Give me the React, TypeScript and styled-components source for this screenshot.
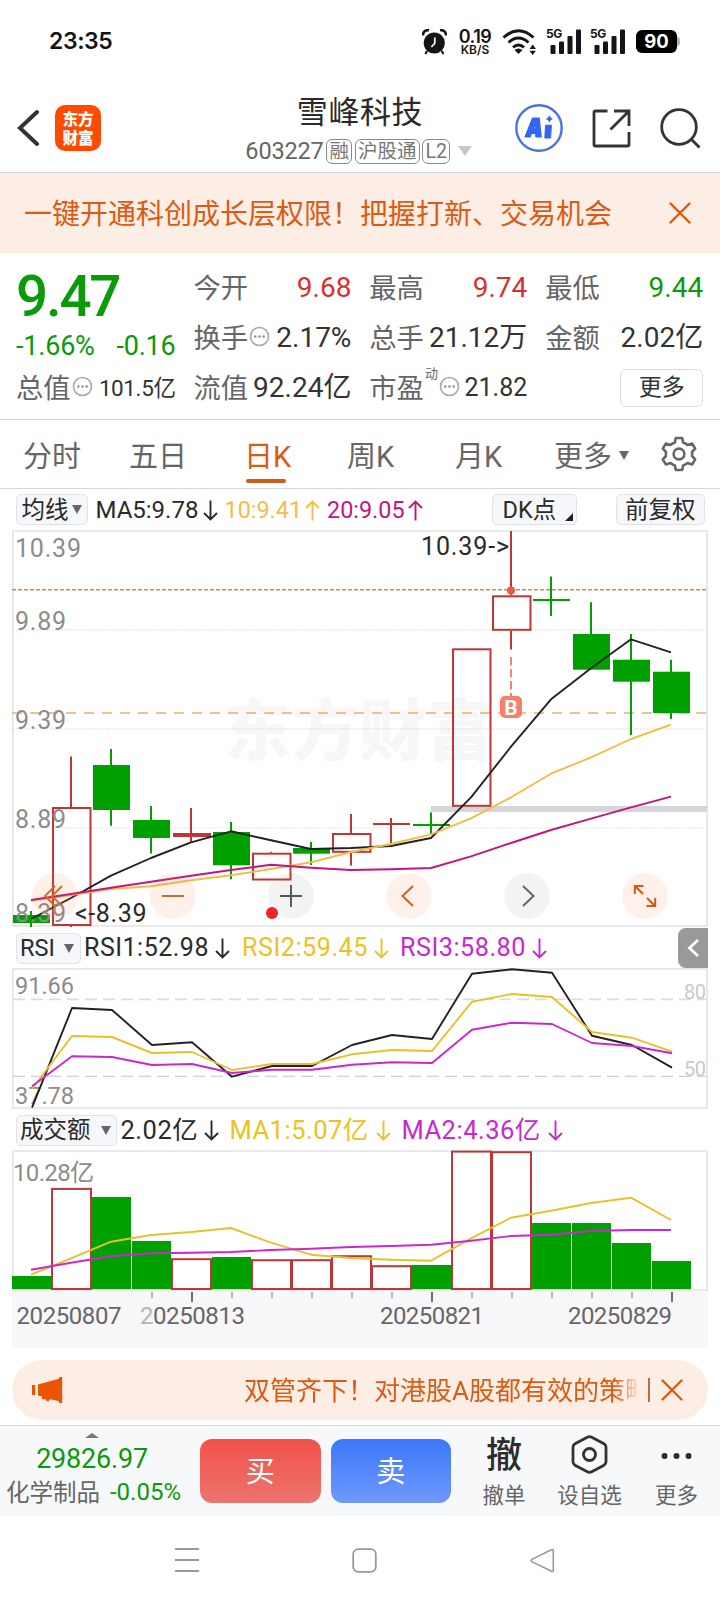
import React from 'react';
import styled, { createGlobalStyle, css } from 'styled-components';

const UI = `Roboto, "Noto Sans CJK SC", sans-serif`;
const GREEN = '#0a9a0a';
const FILL = '#00a000';
const RED = '#d92f2f';
const CANDLE = '#c03636';
const ORANGE = '#dc5a12';
const PURPLE = '#c41482';
const GOLD = '#f2bd45';
const YELLOW = '#ecc21c';
const MAGENTA = '#cb26d0';
const INK = '#2a2a2a';
const GREY = '#666666';

const GlobalStyle = createGlobalStyle`
  * { box-sizing: border-box; }
  html, body { margin: 0; padding: 0; background: #fff; }
  svg { display: block; flex: none; }
`;

const Screen = styled.main`
  width: 720px;
  height: 1604px;
  overflow: hidden;
  display: flex;
  flex-direction: column;
  background: #fff;
  color: ${INK};
  font-family: ${UI};
`;

const Txt = styled.span<{ $s: number; $c?: string; $w?: number; $ls?: number }>`
  font-size: ${p => p.$s}px;
  line-height: 1.2;
  white-space: nowrap;
  color: ${p => p.$c ?? 'inherit'};
  font-weight: ${p => p.$w ?? 400};
  letter-spacing: ${p => p.$ls ?? 0}px;
`;

/* ---------- status bar ---------- */
const StatusBar = styled.header`
  height: 82px;
  padding: 1px 40px 0 49px;
  display: flex;
  align-items: center;
  color: #151515;
  font-family: Inter, Roboto, sans-serif;
`;
const StatusIcons = styled.div`
  margin-left: auto;
  display: flex;
  align-items: center;
`;
const NetSpeed = styled.div`
  width: 36px;
  margin: 0 9px 0 10px;
  display: flex;
  flex-direction: column;
  align-items: center;
`;
const NetValue = styled.div`
  font-size: 18px;
  font-weight: 600;
  line-height: 15px;
  letter-spacing: -0.5px;
`;
const NetUnit = styled.div`
  font-size: 12px;
  font-weight: 600;
  line-height: 11px;
`;
const SignalWrap = styled.div`
  width: 34px;
  margin-left: 10px;
  position: relative;
`;
const SignalLabel = styled.span`
  position: absolute;
  left: -1px;
  top: -1px;
  font-size: 12px;
  line-height: 12px;
  font-weight: 700;
  letter-spacing: -0.5px;
`;
const Battery = styled.div`
  width: 41px;
  height: 23px;
  margin-left: 11px;
  border-radius: 6px;
  background: #000;
  color: #fff;
  font-size: 18.5px;
  font-weight: 700;
  line-height: 23px;
  text-align: center;
`;
const BatteryNub = styled.div`
  width: 3px;
  height: 9px;
  border-radius: 0 3px 3px 0;
  background: #b5b5b5;
`;

const Signal = () => (
  <SignalWrap>
    <SignalLabel>5G</SignalLabel>
    <svg width="34" height="25" viewBox="0 0 34 25" fill="#151515">
      <rect x="3.5" y="16" width="5" height="9" rx="1" />
      <rect x="12" y="12.5" width="5" height="12.5" rx="1" />
      <rect x="20.5" y="7" width="5" height="18" rx="1" />
      <rect x="29" y="0.5" width="5" height="24.5" rx="1" />
    </svg>
  </SignalWrap>
);

/* ---------- title bar ---------- */
const TitleBar = styled.section`
  height: 91px;
  padding-top: 2px;
  display: grid;
  grid-template-columns: 240px 240px 240px;
  border-bottom: 1px solid #d4d6d8;
`;
const TitleLeft = styled.div`
  display: flex;
  align-items: center;
  padding-left: 17px;
  gap: 16px;
`;
const Logo = styled.div`
  width: 46px;
  height: 46px;
  border-radius: 10px;
  background: #ff4a00;
  color: #fff;
  font: 900 15.5px/19px "Noto Sans CJK SC", sans-serif;
  text-align: center;
  padding-top: 4px;
`;
const TitleMid = styled.div`
  display: flex;
  flex-direction: column;
  align-items: center;
  padding: 10px 3px 0 0;
`;
const CodeRow = styled.div`
  display: flex;
  align-items: center;
  gap: 2.5px;
  height: 28px;
  margin-top: 6px;
  color: ${GREY};
`;
const Title = styled(Txt)`margin-left: 3px;`;
const Tag = styled.span<{ $w: number }>`
  width: ${p => p.$w}px;
  height: 25px;
  border: 1.5px solid #8a8a8a;
  border-radius: 6px;
  font-size: 19.5px;
  line-height: 23px;
  text-align: center;
  color: #777;
  white-space: nowrap;
`;
const TitleRight = styled.div`
  display: flex;
  align-items: center;
  padding-left: 35px;
`;
const TitleIcon = styled.div<{ $ml?: number }>`
  margin-left: ${p => p.$ml ?? 0}px;
`;
const Caret = styled.i<{ $w: number; $h: number; $c: string; $up?: boolean }>`
  width: 0;
  height: 0;
  border-left: ${p => p.$w / 2}px solid transparent;
  border-right: ${p => p.$w / 2}px solid transparent;
  ${p =>
    p.$up
      ? css`border-bottom: ${p.$h}px solid ${p.$c};`
      : css`border-top: ${p.$h}px solid ${p.$c};`}
`;
const CodeCaret = styled(Caret)`margin-left: 5px;`;

/* ---------- promotion banner ---------- */
const Promo = styled.section`
  height: 80px;
  padding: 0 29px 0 24px;
  display: flex;
  align-items: center;
  justify-content: space-between;
  background: #fceee5;
`;
const PromoText = styled(Txt)`padding-top: 4px;`;
const Close = () => (
  <svg width="22" height="22" viewBox="0 0 22 22" stroke={ORANGE} strokeWidth="2.4" strokeLinecap="round">
    <path d="M1.5 1.5 20.5 20.5M20.5 1.5 1.5 20.5" />
  </svg>
);

/* ---------- quote panel ---------- */
const Quote = styled.section`
  height: 167px;
  padding: 10px 16px 0 16px;
  display: grid;
  grid-template-columns: 159.5px 158px 158px 158px;
  grid-template-rows: 50px 50px 50px;
  column-gap: 17.9px;
  border-bottom: 1px solid #d4d6d8;
`;
const PriceBlock = styled.div`
  grid-row: span 2;
  display: flex;
  flex-direction: column;
  padding-top: 3px;
`;
const Price = styled.div`
  color: ${GREEN};
  font-size: 56.5px;
  font-weight: 500;
  line-height: 62px;
  letter-spacing: -2.2px;
`;
const ChangeRow = styled.div`
  display: flex;
  justify-content: space-between;
  margin-top: 2px;
`;
const Cell = styled.div`
  display: flex;
  align-items: center;
  justify-content: space-between;
`;
const Label = styled.span`
  display: flex;
  align-items: center;
  padding-top: 2px;
  font-size: 27.3px;
  line-height: 36px;
  white-space: nowrap;
  color: ${GREY};
`;
const Sup = styled.sup`
  font-size: 13px;
  line-height: 14px;
  align-self: flex-start;
  margin: -4px 0 0 1px;
`;
const MoreButton = styled.button`
  width: 83px;
  height: 38px;
  margin-left: auto;
  padding: 0;
  border: 1.5px solid #dcdee2;
  border-radius: 6px;
  background: #fff;
  color: #333;
  font: 400 23px/32px ${UI};
`;
const HintSlot = styled.span`
  margin: 0 0 5px 1px;
`;
const Hint = () => (
  <HintSlot>
    <svg width="21" height="21" viewBox="0 0 21 21">
      <circle cx="10.5" cy="10.5" r="9" fill="none" stroke="#a8a8a8" strokeWidth="1.6" />
      <g fill="#8a8a8a">
        <circle cx="6.3" cy="10.5" r="1.2" />
        <circle cx="10.5" cy="10.5" r="1.2" />
        <circle cx="14.7" cy="10.5" r="1.2" />
      </g>
    </svg>
  </HintSlot>
);

type StatProps = {
  label: string;
  value: string;
  color?: string;
  size?: number;
  hint?: boolean;
  sup?: string;
  ls?: number;
};
const Stat = ({ label, value, color = '#333', size = 28, hint, sup, ls }: StatProps) => (
  <Cell>
    <Label>
      {label}
      {sup && <Sup>{sup}</Sup>}
      {hint && <Hint />}
    </Label>
    <Txt $s={size} $c={color} $ls={ls}>{value}</Txt>
  </Cell>
);

/* ---------- period tabs ---------- */
const Tabs = styled.nav`
  height: 69px;
  padding-left: 23px;
  display: grid;
  grid-template-columns: 106px 115px 103px 108px 99px 106px auto;
  align-items: stretch;
  border-bottom: 1px solid #d4d6d8;
`;
const Tab = styled.div<{ $on?: boolean }>`
  display: flex;
  flex-direction: column;
  font-size: 29px;
  line-height: 36px;
  padding-top: 19px;
  white-space: nowrap;
  color: ${p => (p.$on ? ORANGE : GREY)};
  &::after {
    content: '';
    width: 40px;
    height: 4px;
    margin: 4px 0 0 2px;
    border-radius: 2px;
    background: ${p => (p.$on ? '#cc5a18' : 'transparent')};
  }
`;
const TabMore = styled.span`
  display: flex;
  align-items: center;
  gap: 7px;
`;
const TabCaret = styled(Caret)`margin-bottom: 3px;`;
const GearSlot = styled.div`padding: 16px 0 0 1px;`;

/* ---------- indicator headers ---------- */
const Legend = styled.div<{ $h: number }>`
  height: ${p => p.$h}px;
  padding-left: 16px;
  display: flex;
  align-items: center;
  position: relative;
`;
const Chip = styled.div<{ $w: number; $gap?: number }>`
  width: ${p => p.$w}px;
  height: 31px;
  padding: 0 4.5px;
  display: flex;
  align-items: center;
  gap: ${p => p.$gap ?? 3}px;
  border: 1.5px solid #dfe2e8;
  border-radius: 5px;
  background: #f6f7fa;
  font-size: 23.5px;
  line-height: 28px;
  white-space: nowrap;
  position: relative;
`;
const LowChip = styled(Chip)`
  margin-top: 1px;
  padding-left: 3px;
`;
const DkChip = styled(Chip)`
  margin-left: auto;
  padding-left: 9.5px;
`;
const AdjustChip = styled(Chip)`
  margin: 0 15.5px 0 39px;
  justify-content: center;
`;
const Corner = styled.i`
  position: absolute;
  right: 3.5px;
  bottom: 3.5px;
  border-left: 8px solid transparent;
  border-bottom: 8px solid #222;
`;
const Reading = styled.div<{ $c: string; $w: number; $s: number; $ml: number; $ls?: number }>`
  width: ${p => p.$w}px;
  margin-left: ${p => p.$ml}px;
  padding-top: 1px;
  display: flex;
  align-items: center;
  justify-content: space-between;
  color: ${p => p.$c};
  font-size: ${p => p.$s}px;
  line-height: 30px;
  letter-spacing: ${p => p.$ls ?? 0}px;
  white-space: nowrap;
`;
const Arrow = ({ up }: { up?: boolean }) => (
  <svg width="15" height="21" viewBox="0 0 15 21" fill="none" stroke="currentColor" strokeWidth="1.9">
    <path d={up ? 'M7.5 20.5V1.5M1 8 7.5 1.5 14 8' : 'M7.5 0.5V19.5M1 13 7.5 19.5 14 13'} />
  </svg>
);
const Collapse = styled.div`
  position: absolute;
  right: 12px;
  top: 1px;
  width: 30px;
  height: 40px;
  border-radius: 8px 0 0 8px;
  background: #999;
  display: flex;
  align-items: center;
  justify-content: center;
`;

/* ---------- charts ---------- */
const ChartBox = styled.div`
  margin: 0 12px;
  position: relative;
`;
const Controls = styled.div`
  position: absolute;
  left: 20px;
  bottom: 8px;
  display: flex;
  gap: 72px;
`;
const Round = styled.div<{ $grey?: boolean }>`
  width: 46px;
  height: 46px;
  border-radius: 50%;
  background: ${p => (p.$grey ? 'rgba(120,120,120,0.09)' : 'rgba(255,110,40,0.1)')};
  display: flex;
  align-items: center;
  justify-content: center;
`;

type Candle = { up: boolean; t: number; b: number; h: number; l: number; flat?: boolean };
const CANDLES: Candle[] = [
  { up: false, t: 915, b: 923, h: 911, l: 927 },
  { up: true, t: 807, b: 926, h: 756.5, l: 927 },
  { up: false, t: 765, b: 810, h: 749, l: 825.7 },
  { up: false, t: 820, b: 838, h: 806, l: 853.5 },
  { up: true, t: 833, b: 837, h: 808, l: 843, flat: true },
  { up: false, t: 832, b: 865.3, h: 822, l: 879.3 },
  { up: true, t: 852.7, b: 880.5, h: 851.7, l: 853 },
  { up: false, t: 848, b: 853.7, h: 842, l: 865 },
  { up: true, t: 833, b: 852.8, h: 814, l: 865.5 },
  { up: true, t: 823, b: 825, h: 818, l: 843.5, flat: true },
  { up: false, t: 824, b: 826, h: 812.5, l: 835 },
  { up: true, t: 648.3, b: 806.8, h: 648.3, l: 650 },
  { up: true, t: 595.3, b: 630.8, h: 531, l: 649.5 },
  { up: false, t: 599, b: 601, h: 576.5, l: 616 },
  { up: false, t: 634, b: 669.7, h: 602.3, l: 669 },
  { up: false, t: 659.7, b: 681.7, h: 634, l: 735 },
  { up: false, t: 671.7, b: 713, h: 659.7, l: 719 },
];
const VOLUME: [boolean, number][] = [
  [false, 1276], [true, 1188], [false, 1197], [false, 1241], [true, 1258.3], [false, 1257],
  [true, 1259.3], [true, 1259.3], [true, 1255.3], [true, 1265.3], [false, 1265], [true, 1150.7],
  [true, 1151.3], [false, 1223], [false, 1223], [false, 1243], [false, 1261],
];
const series = (x0: number, ys: number[]) => ys.map((y, i) => `${x0 + i * 40},${y}`).join(' ');

const MA5 = [919, 898, 875.7, 858, 842.3, 831.3, 840.3, 849, 848, 846, 838, 797.3, 746.7, 699.3, 668.3, 639.3, 652.3];
const MA10 = [900.7, 895, 889, 886.3, 880.3, 875.3, 869, 862.3, 852, 844, 834.3, 818.3, 797.3, 773.7, 757.3, 739, 724.7];
const MA20 = [900, 894, 887.7, 881.7, 875.7, 870, 864.7, 867.7, 870, 869.3, 868, 856.3, 843, 830, 818.7, 807.3, 796.7];
const RSI1 = [1107.7, 1008, 1010, 1045, 1042.3, 1076.7, 1066, 1066, 1045, 1035, 1039, 973.7, 969.3, 972.7, 1035.7, 1045, 1067.7];
const RSI2 = [1089, 1036, 1037, 1053, 1052, 1070, 1064, 1064, 1054.3, 1050, 1051, 1001.7, 994, 997, 1032, 1037.7, 1051.7];
const RSI3 = [1086.3, 1056.3, 1057, 1065, 1064, 1073, 1069.7, 1069.7, 1064.7, 1062.3, 1063, 1029.7, 1022.7, 1024, 1043, 1046, 1053.3];
const VMA1 = [1274.7, 1258.3, 1241.7, 1235, 1232, 1228, 1242.7, 1254.7, 1258, 1259.7, 1260.7, 1238.3, 1217.7, 1210.7, 1203, 1197.7, 1220];
const VMA2 = [1269.7, 1262.7, 1256.3, 1253.3, 1252.7, 1252, 1250, 1248.7, 1247, 1246, 1244.7, 1240.7, 1236, 1234.7, 1231, 1230, 1230];

type MarkProps = { x: number; y: number; w: number; s: number; c?: string; children: string };
const Mark = ({ x, y, w, s, c = '#8c8c8c', children }: MarkProps) => (
  <text x={x} y={y + s * 0.356} fontSize={s} fill={c} fontFamily={UI} textLength={w}>
    {children}
  </text>
);

const Frame = ({ y, h }: { y: number; h: number }) => (
  <path d={`M12.75 ${y + 1}H707V${y + h - 1}H12.75Z`} fill="none" stroke="#e2e2e2" strokeWidth="1.6" />
);

const PriceChart = () => (
  <svg width="696" height="397" viewBox="12 530 696 397">
    <text x="224" y="755" fontSize="67" fontWeight="900" fill="#f7f7f7" fontFamily={`"Noto Sans CJK SC", sans-serif`} textLength="270">
      东方财富
    </text>
    <Frame y={530} h={397} />
    <g stroke="#dedede" strokeWidth="1.2" strokeDasharray="1.5 1.5">
      <path d="M13 629.8H706M13 728.8H706M13 828H706" />
    </g>
    <rect x="431" y="806" width="276" height="6" fill="#d3d6db" />
    <path d="M12 589.8H706" stroke="#c88a5c" strokeWidth="1.6" strokeDasharray="4 2" />
    <path d="M12 713H706" stroke="#e3b078" strokeWidth="1.6" strokeDasharray="10 8" />
    {CANDLES.map((k, i) => {
      const c = 31 + i * 40;
      const color = k.up ? CANDLE : FILL;
      return (
        <g key={i}>
          <path d={`M${c} ${k.h}V${k.up && !k.flat ? k.t : k.l}`} stroke={color} strokeWidth="2" />
          {k.up && !k.flat ? (
            <>
              <rect x={c - 18} y={k.t + 1} width="37.5" height={k.b - k.t - 2} fill="none" stroke={color} strokeWidth="2" />
              {k.l > k.b && <path d={`M${c} ${k.b}V${k.l}`} stroke={color} strokeWidth="2" />}
            </>
          ) : (
            <rect x={c - 18} y={k.t} width={i === 4 ? 38 : 37} height={k.b - k.t} fill={color} />
          )}
        </g>
      );
    })}
    <path d="M511 657V696" stroke="#ee7a68" strokeWidth="1.8" strokeDasharray="8.5 3.5" />
    <circle cx="511" cy="590.5" r="4" fill="#ef5a42" />
    <g fill="none" strokeWidth="1.9" strokeLinejoin="round">
      <polyline points={series(31, MA5)} stroke="#222" />
      <polyline points={series(31, MA10)} stroke={GOLD} />
      <polyline points={series(31, MA20)} stroke={PURPLE} />
    </g>
    <rect x="500" y="696" width="22" height="22" rx="5" fill="#f77f6c" />
    <text x="511" y="714.6" fontSize="21" fontWeight="700" fill="#fff" textAnchor="middle" fontFamily={UI}>B</text>
    <Mark x={15} y={548} w={66} s={25}>10.39</Mark>
    <Mark x={15} y={621} w={51} s={25}>9.89</Mark>
    <Mark x={15} y={720} w={51} s={25}>9.39</Mark>
    <Mark x={15} y={819} w={51} s={25}>8.89</Mark>
    <Mark x={15} y={913} w={51} s={25}>8.39</Mark>
    <Mark x={75} y={913} w={71.5} s={25} c={INK}>{'<-8.39'}</Mark>
    <Mark x={421} y={546} w={88} s={25} c={INK}>{'10.39->'}</Mark>
    <circle cx="272" cy="913" r="6" fill="#f02424" />
  </svg>
);

const RsiChart = () => (
  <svg width="696" height="141" viewBox="12 968 696 141">
    <Frame y={968} h={141} />
    <path d="M13 999.3H706" stroke="#dcdcdc" strokeWidth="1.8" strokeDasharray="12 6" />
    <path d="M13 1076.3H706" stroke="#c2c2c2" strokeWidth="1.1" strokeDasharray="12 6" />
    <Mark x={684} y={992} w={22} s={20} c="#cacaca">80</Mark>
    <Mark x={684} y={1069} w={22} s={20} c="#cacaca">50</Mark>
    <Mark x={15} y={986} w={59} s={23.5}>91.66</Mark>
    <Mark x={15} y={1096} w={59} s={23.5}>37.78</Mark>
    <g fill="none" strokeWidth="1.9" strokeLinejoin="round">
      <polyline points={series(32, RSI1)} stroke="#222" />
      <polyline points={series(32, RSI2)} stroke="#e8c02a" />
      <polyline points={series(32, RSI3)} stroke={MAGENTA} />
    </g>
  </svg>
);

const VolumeChart = () => (
  <svg width="696" height="198" viewBox="12 1150 696 198">
    <rect x="12" y="1291" width="696" height="57" fill="#f7f7fa" />
    <Frame y={1150} h={141} />
    <Mark x={13} y={1172.5} w={81} s={24}>10.28亿</Mark>
    {VOLUME.map(([up, top], i) => {
      const x = 12 + i * 40;
      return up ? (
        <rect key={i} x={x} y={top + 0.9} width="39" height={1289.6 - top - 1.5} fill="none" stroke={CANDLE} strokeWidth="2" />
      ) : (
        <rect key={i} x={x} y={top} width="39" height={1289 - top} fill={FILL} />
      );
    })}
    <g fill="none" strokeWidth="1.9" strokeLinejoin="round">
      <polyline points={series(31, VMA1)} stroke="#e8c02a" />
      <polyline points={series(31, VMA2)} stroke={MAGENTA} />
    </g>
    {Array.from({ length: 14 }, (_, i) => {
      const major = i % 6 === 1 || i === 13;
      return (
        <path
          key={i}
          d={`M${152 + i * 40} 1292V${major ? 1302 : 1298}`}
          stroke={major ? '#666' : '#b5b5b5'}
          strokeWidth="1.9"
        />
      );
    })}
    <Mark x={16.5} y={1315.8} w={105} s={24} c={GREY}>20250807</Mark>
    <Mark x={140} y={1315.8} w={13} s={24} c="#b5b5b5">2</Mark>
    <Mark x={153} y={1315.8} w={92} s={24} c={GREY}>0250813</Mark>
    <Mark x={380} y={1315.8} w={104} s={24} c={GREY}>20250821</Mark>
    <Mark x={568} y={1315.8} w={104} s={24} c={GREY}>20250829</Mark>
  </svg>
);

/* ---------- notice ---------- */
const Notice = styled.section`
  height: 60px;
  margin: 12px 12px 5px;
  padding: 0 25px 0 20px;
  border-radius: 30px;
  background: #fceee5;
  display: flex;
  align-items: center;
`;
const NoticeText = styled.div`
  width: 394px;
  margin-left: 181px;
  overflow: hidden;
  white-space: nowrap;
  font-size: 26px;
  line-height: 36px;
  padding-top: 1px;
  color: ${ORANGE};
  -webkit-mask-image: linear-gradient(90deg, #000 94%, transparent 101%);
  mask-image: linear-gradient(90deg, #000 94%, transparent 101%);
`;
const Divider = styled.i`
  width: 1.5px;
  height: 24px;
  margin: 0 11.5px 0 11.5px;
  background: #c46a38;
`;

/* ---------- action bar ---------- */
const ActionBar = styled.footer`
  height: 91px;
  border-top: 1px solid #d4d6d8;
  background: #f7f8fa;
  display: flex;
`;
const Sector = styled.div`
  width: 184px;
  padding-top: 7px;
  display: flex;
  flex-direction: column;
  align-items: center;
`;
const SectorValue = styled(Txt)`margin-top: 5px;`;
const SectorRow = styled.div`
  display: flex;
  align-items: center;
  gap: 10px;
  margin: 3px 0 0 3px;
`;
const TradeButton = styled.button<{ $from: string; $to: string; $ml: number }>`
  width: 120.5px;
  height: 64px;
  margin: 13px 0 0 ${p => p.$ml}px;
  padding: 0;
  border: 0;
  border-radius: 12px;
  background: linear-gradient(${p => p.$from}, ${p => p.$to});
  color: #fff;
  font: 400 29px/66px ${UI};
`;
const Tools = styled.div`
  margin-left: 22.5px;
  display: grid;
  grid-template-columns: 61px 110px 64px;
`;
const Tool = styled.div`
  display: flex;
  flex-direction: column;
  align-items: center;
  font-size: 21.5px;
  line-height: 30px;
  color: ${GREY};
  white-space: nowrap;
`;
const ToolIcon = styled.div`
  height: 55px;
  padding-top: 2px;
  display: flex;
  align-items: center;
  color: #2c2c2c;
  font-size: 36px;
  line-height: 44px;
  font-weight: 500;
`;
const ToolGlyph = styled(ToolIcon)`padding-top: 5px;`;

const SystemNav = styled.nav`
  height: 88px;
  padding-left: 175px;
  display: flex;
  align-items: center;
  gap: 153px;
`;

export default function App() {
  return (
    <>
      <GlobalStyle />
      <Screen>
        <StatusBar>
          <Txt $s={23} $w={600} $ls={-0.4}>23:35</Txt>
          <StatusIcons>
            <svg width="25" height="26" viewBox="0 0 25 26">
              <circle cx="12.3" cy="14" r="10.6" fill="#151515" />
              <path d="M1 6.5A5 5 0 0 1 7 1.2M24 6.5A5 5 0 0 0 18 1.2" fill="none" stroke="#151515" strokeWidth="2.6" />
              <path d="M5 22 3.4 25M19.8 22l1.6 3" stroke="#151515" strokeWidth="2.2" />
              <path d="M12.8 8.5V14.2L9.4 18" fill="none" stroke="#fff" strokeWidth="1.7" />
            </svg>
            <NetSpeed>
              <NetValue>0.19</NetValue>
              <NetUnit>KB/S</NetUnit>
            </NetSpeed>
            <svg width="35" height="26" viewBox="0 0 35 26" fill="none" stroke="#151515" strokeWidth="3">
              <path d="M1.5 8.5Q16.5 -5 31.5 8.5" />
              <path d="M6.5 13.5Q16.5 4.6 26.5 13.5" />
              <path d="M11 18.3Q16.5 13.6 22 18.3" />
              <path d="M12.5 21Q16.5 18 20.5 21L16.5 25Z" fill="#151515" stroke="none" />
              <path d="M27.5 20 30.7 15.5 33.9 20ZM27.5 21.7 30.7 26 33.9 21.7Z" fill="#151515" stroke="none" />
            </svg>
            <Signal />
            <Signal />
            <Battery>90</Battery>
            <BatteryNub />
          </StatusIcons>
        </StatusBar>

        <TitleBar>
          <TitleLeft>
            <svg width="22" height="38" viewBox="0 0 22 38" fill="none" stroke="#333" strokeWidth="4" strokeLinecap="round">
              <path d="M20 3 3 19 20 35" />
            </svg>
            <Logo>东方<br />财富</Logo>
          </TitleLeft>
          <TitleMid>
            <Title $s={31} $ls={0.6}>雪峰科技</Title>
            <CodeRow>
              <Txt $s={23.5} $ls={-0.15}>603227</Txt>
              <Tag $w={26}>融</Tag>
              <Tag $w={65}>沪股通</Tag>
              <Tag $w={28}>L2</Tag>
              <CodeCaret $w={15} $h={10} $c="#c8c8c8" />
            </CodeRow>
          </TitleMid>
          <TitleRight>
            <TitleIcon>
              <svg width="48" height="48" viewBox="0 0 48 48">
                <circle cx="24" cy="24" r="22.7" fill="#fff" stroke="#4a72e6" strokeWidth="2.4" />
                <path fillRule="evenodd" fill="#3366f5" stroke="#3366f5" strokeWidth="1.2" strokeLinejoin="round" d="M10 33 17.6 14H24.2L26.2 33H20.9L20.6 29.4H16.4L15.2 33ZM18 24.8H20.3L20 19.4Z" />
                <path fill="#3366f5" stroke="#3366f5" strokeWidth="1" strokeLinejoin="round" d="M30.6 21.2H36.4L35.6 34H29.8Z" />
                <path fill="#3366f5" d="M34.4 11.2 35.7 13.6 38 14.9 35.7 16.2 34.4 18.6 33.1 16.2 30.8 14.9 33.1 13.6Z" />
              </svg>
            </TitleIcon>
            <TitleIcon $ml={28.5}>
              <svg width="39" height="39" viewBox="0 0 39 39" fill="none" stroke="#333" strokeWidth="2.8">
                <path d="M15.5 2H3.5Q2 2 2 3.5V35.5Q2 37 3.5 37H35.5Q37 37 37 35.5V23" />
                <path d="M22 2H37V17M37 2 18.5 20.5" />
              </svg>
            </TitleIcon>
            <TitleIcon $ml={29.5}>
              <svg width="41" height="41" viewBox="0 0 41 41" fill="none" stroke="#333" strokeWidth="2.8">
                <circle cx="19" cy="19" r="17.3" />
                <path d="M31 31 39.5 39.5" />
              </svg>
            </TitleIcon>
          </TitleRight>
        </TitleBar>

        <Promo>
          <PromoText $s={28} $c={ORANGE}>一键开通科创成长层权限！把握打新、交易机会</PromoText>
          <Close />
        </Promo>

        <Quote>
          <PriceBlock>
            <Price>9.47</Price>
            <ChangeRow>
              <Txt $s={27} $c={GREEN} $ls={-0.2}>-1.66%</Txt>
              <Txt $s={27} $c={GREEN} $ls={-0.2}>-0.16</Txt>
            </ChangeRow>
          </PriceBlock>
          <Stat label="今开" value="9.68" color={RED} />
          <Stat label="最高" value="9.74" color={RED} />
          <Stat label="最低" value="9.44" color={GREEN} />
          <Stat label="换手" value="2.17%" hint />
          <Stat label="总手" value="21.12万" />
          <Stat label="金额" value="2.02亿" />
          <Stat label="总值" value="101.5亿" size={22.5} ls={-0.4} hint />
          <Stat label="流值" value="92.24亿" />
          <Stat label="市盈" value="21.82" sup="动" size={25} hint />
          <Cell>
            <MoreButton>更多</MoreButton>
          </Cell>
        </Quote>

        <Tabs>
          <Tab>分时</Tab>
          <Tab>五日</Tab>
          <Tab $on>日K</Tab>
          <Tab>周K</Tab>
          <Tab>月K</Tab>
          <Tab>
            <TabMore>
              更多
              <TabCaret $w={10} $h={9} $c="#666" />
            </TabMore>
          </Tab>
          <GearSlot>
            <svg width="36" height="36" viewBox="0 0 36 36" fill="none" stroke="#666" strokeWidth="2.6" strokeLinejoin="round">
              <path d="M14.8 2H21.2L22.2 6.6Q24.6 7.4 26.5 9L31.2 7.6 34.2 12.6 31 16Q31.4 18 31 20L34.2 23.4 31.2 28.4 26.5 27Q24.6 28.6 22.2 29.4L21.2 34H14.8L13.8 29.4Q11.4 28.6 9.5 27L4.8 28.4 1.8 23.4 5 20Q4.6 18 5 16L1.8 12.6 4.8 7.6 9.5 9Q11.4 7.4 13.8 6.6Z" />
              <circle cx="18" cy="18" r="5.4" />
            </svg>
          </GearSlot>
        </Tabs>

        <Legend $h={41}>
          <Chip $w={72}>均线<Caret $w={10} $h={9} $c="#666" /></Chip>
          <Reading $c={INK} $w={122} $s={24} $ml={7.5}>MA5:9.78<Arrow /></Reading>
          <Reading $c={GOLD} $w={95} $s={23.4} $ml={7}>10:9.41<Arrow up /></Reading>
          <Reading $c={PURPLE} $w={96} $s={23.4} $ml={7.5}>20:9.05<Arrow up /></Reading>
          <DkChip $w={85}>DK点<Corner /></DkChip>
          <AdjustChip $w={88.5}>前复权</AdjustChip>
        </Legend>

        <ChartBox>
          <PriceChart />
          <Controls>
            <Round>
              <svg width="22" height="24" viewBox="0 0 22 24" fill="none" stroke="#dd6420" strokeWidth="1.8">
                <path d="M11 2 1 12 11 22M18 2 8 12 18 22" />
              </svg>
            </Round>
            <Round>
              <svg width="22" height="2" viewBox="0 0 22 2"><rect width="22" height="2" fill="#b9703c" /></svg>
            </Round>
            <Round $grey>
              <svg width="22" height="22" viewBox="0 0 22 22" stroke="#555" strokeWidth="1.9"><path d="M0 11H22M11 0V22" /></svg>
            </Round>
            <Round>
              <svg width="22" height="24" viewBox="0 0 22 24" fill="none" stroke="#cf6220" strokeWidth="2"><path d="M15 2 4.5 12 15 22" /></svg>
            </Round>
            <Round $grey>
              <svg width="22" height="24" viewBox="0 0 22 24" fill="none" stroke="#666" strokeWidth="2"><path d="M7 2 17.5 12 7 22" /></svg>
            </Round>
            <Round>
              <svg width="24" height="24" viewBox="0 0 24 24" fill="none" stroke="#cf5c18" strokeWidth="2">
                <path d="M1.8 10V2H10.5M2 2 10 10M22.2 14V22H13.5M22 22 14 14" />
              </svg>
            </Round>
          </Controls>
        </ChartBox>

        <Legend $h={41}>
          <LowChip $w={65} $gap={9}>RSI<Caret $w={10} $h={9} $c="#666" /></LowChip>
          <Reading $c={INK} $w={146} $s={25} $ml={3} $ls={0.5}>RSI1:52.98<Arrow /></Reading>
          <Reading $c={YELLOW} $w={147} $s={25.2} $ml={12} $ls={0.5}>RSI2:59.45<Arrow /></Reading>
          <Reading $c={MAGENTA} $w={147} $s={25.2} $ml={11} $ls={0.5}>RSI3:58.80<Arrow /></Reading>
          <Collapse>
            <svg width="12" height="20" viewBox="0 0 12 20" fill="none" stroke="#fff" strokeWidth="2.8"><path d="M11 2 2.5 10 11 18" /></svg>
          </Collapse>
        </Legend>
        <ChartBox><RsiChart /></ChartBox>

        <Legend $h={41}>
          <LowChip $w={101} $gap={10}>成交额<Caret $w={10} $h={9} $c="#666" /></LowChip>
          <Reading $c={INK} $w={98} $s={25.5} $ml={3.5} $ls={0.5}>2.02亿<Arrow /></Reading>
          <Reading $c={YELLOW} $w={161} $s={25.5} $ml={11} $ls={0.5}>MA1:5.07亿<Arrow /></Reading>
          <Reading $c={MAGENTA} $w={161} $s={25.5} $ml={11} $ls={0.5}>MA2:4.36亿<Arrow /></Reading>
        </Legend>
        <ChartBox><VolumeChart /></ChartBox>

        <Notice>
          <svg width="31" height="26" viewBox="0 0 31 26" fill="#ea5504">
            <path d="M0 8H3.2V18H0ZM6 7.6 27 1.8V0H30.2V26H27V24.2L20 22.4 17 22.4V24H14.5L13.5 22.2H10V19.5L6 18.4Z" />
          </svg>
          <NoticeText>双管齐下！对港股A股都有效的策略</NoticeText>
          <Divider />
          <Close />
        </Notice>

        <ActionBar>
          <Sector>
            <Caret $up $w={14} $h={5} $c="#777" />
            <SectorValue $s={27} $c={GREEN} $ls={-0.2}>29826.97</SectorValue>
            <SectorRow>
              <Txt $s={23.5} $c={GREY}>化学制品</Txt>
              <Txt $s={24} $c={GREEN}>-0.05%</Txt>
            </SectorRow>
          </Sector>
          <TradeButton $from="#f2514a" $to="#ec746e" $ml={16}>买</TradeButton>
          <TradeButton $from="#3c78f8" $to="#6f99ff" $ml={10}>卖</TradeButton>
          <Tools>
            <Tool><ToolGlyph>撤</ToolGlyph>撤单</Tool>
            <Tool>
              <ToolIcon>
                <svg width="37" height="39" viewBox="0 0 37 39" fill="none" stroke="#333" strokeWidth="2.8">
                  <path strokeLinejoin="round" d="M16.3 2.2Q18.5 1 20.7 2.2L33 8.8Q35 10 35 12.2V26.8Q35 29 33 30.2L20.7 36.8Q18.5 38 16.3 36.8L4 30.2Q2 29 2 26.8V12.2Q2 10 4 8.8Z" />
                  <circle cx="18.5" cy="19.5" r="6" />
                </svg>
              </ToolIcon>
              设自选
            </Tool>
            <Tool>
              <ToolIcon>
                <svg width="31" height="8" viewBox="0 0 31 8" fill="#2c2c2c">
                  <circle cx="3.5" cy="5" r="3" /><circle cx="15.5" cy="5" r="3" /><circle cx="27.5" cy="5" r="3" />
                </svg>
              </ToolIcon>
              更多
            </Tool>
          </Tools>
        </ActionBar>

        <SystemNav>
          <svg width="24" height="24" viewBox="0 0 24 24" fill="#999">
            <rect width="24" height="2" y="0" /><rect width="24" height="2" y="11" /><rect width="24" height="2" y="22" />
          </svg>
          <svg width="25" height="25" viewBox="0 0 25 25" fill="none" stroke="#999" strokeWidth="1.8">
            <rect x="1.2" y="1.2" width="22.6" height="22.6" rx="5" />
          </svg>
          <svg width="25" height="25" viewBox="0 0 25 25" fill="none" stroke="#999" strokeWidth="1.6">
            <path strokeLinejoin="round" d="M21.5 1.8Q23.3 1 23.3 3V22Q23.3 24 21.5 23.2L2.2 13.9Q0 12.5 2.2 11.1Z" />
          </svg>
        </SystemNav>
      </Screen>
    </>
  );
}
